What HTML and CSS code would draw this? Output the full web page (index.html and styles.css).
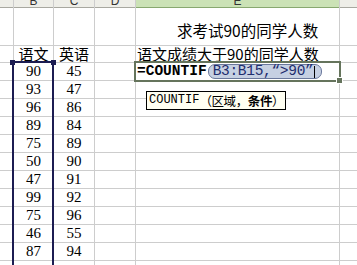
FILE: index.html
```html
<!DOCTYPE html>
<html lang="zh-CN">
<head>
  <meta charset="UTF-8" />
  <title>COUNTIF</title>
  <link rel="stylesheet" href="styles.css">
</head>
<body>
  <div class="sheet">
    <!-- column headers -->
    <div class="hd"></div>
    <div class="hd">B</div>
    <div class="hd">C</div>
    <div class="hd">D</div>
    <div class="hd hd-on">E</div>
    <div class="hd"></div>

    <!-- row 1 -->
    <div class="c tall"></div>
    <div class="c tall"></div>
    <div class="c tall"></div>
    <div class="c tall"></div>
    <div class="c tall title">求考试90的同学人数</div>
    <div class="c tall"></div>

    <!-- row 2 -->
    <div class="c"></div>
    <div class="c mid cjk">语文</div>
    <div class="c mid cjk">英语</div>
    <div class="c"></div>
    <div class="c cjk">语文成绩大于90的同学人数</div>
    <div class="c"></div>

    <!-- row 3 -->
    <div class="c"></div>
    <div class="c mid">90</div>
    <div class="c mid">45</div>
    <div class="c"></div>
    <div class="c active">
      <span class="fx">=COUNTIF</span><span class="ref">B3:B15,“&gt;90”<i class="caret"></i></span>
      <span class="fill"></span>
    </div>
    <div class="c"></div>

    <div class="c"></div><div class="c mid">93</div><div class="c mid">47</div><div class="c"></div>
    <div class="c">
      <div class="tip">COUNTIF<span class="tip-cjk">（区域，<b>条件</b>）</span></div>
    </div>
    <div class="c"></div>
    <div class="c"></div><div class="c mid">96</div><div class="c mid">86</div><div class="c"></div><div class="c"></div><div class="c"></div>
    <div class="c"></div><div class="c mid">89</div><div class="c mid">84</div><div class="c"></div><div class="c"></div><div class="c"></div>
    <div class="c"></div><div class="c mid">75</div><div class="c mid">89</div><div class="c"></div><div class="c"></div><div class="c"></div>
    <div class="c"></div><div class="c mid">50</div><div class="c mid">90</div><div class="c"></div><div class="c"></div><div class="c"></div>
    <div class="c"></div><div class="c mid">47</div><div class="c mid">91</div><div class="c"></div><div class="c"></div><div class="c"></div>
    <div class="c"></div><div class="c mid">99</div><div class="c mid">92</div><div class="c"></div><div class="c"></div><div class="c"></div>
    <div class="c"></div><div class="c mid">75</div><div class="c mid">96</div><div class="c"></div><div class="c"></div><div class="c"></div>
    <div class="c"></div><div class="c mid">46</div><div class="c mid">55</div><div class="c"></div><div class="c"></div><div class="c"></div>
    <div class="c"></div><div class="c mid">87</div><div class="c mid">94</div><div class="c"></div><div class="c"></div><div class="c"></div>
    <div class="c"></div><div class="c mid"></div><div class="c mid"></div><div class="c"></div><div class="c"></div><div class="c"></div>

    <!-- B3:B15 range outline -->
    <div class="range">
      <span class="knob knob-l"></span>
      <span class="knob knob-r"></span>
    </div>
  </div>
</body>
</html>
```

FILE: styles.css
```css
body {
  margin: 0;
  background: #fff;
  overflow: hidden;
}

.sheet {
  position: relative;
  display: grid;
  grid-template-columns: 13px 39px 40px 40px 203px 30px;
  grid-template-rows: 7px 37px 16px repeat(12, 17px);
  gap: 1px;
  background: #cdcdcd;
  width: 357px;
  height: 265px;
  overflow: hidden;
  font-family: "Liberation Serif", "Noto Sans CJK SC", serif;
  font-size: 15px;
  color: #000;
}

.hd {
  background: #eeeee8;
  display: flex;
  justify-content: center;
  align-items: flex-end;
  overflow: hidden;
  font-family: "Liberation Sans", sans-serif;
  font-size: 12px;
  line-height: 12px;
  color: #333;
  border-bottom: 1px solid #a8a8a0;
  margin-bottom: -1px;
}

.hd-on {
  background: #cbe2b6;
  border-bottom-color: #88a870;
}

.c {
  background: #fff;
  display: flex;
  align-items: center;
  line-height: 17px;
  white-space: nowrap;
  position: relative;
}

.mid {
  justify-content: center;
}

.cjk {
  font-family: "Noto Sans CJK SC", sans-serif;
  font-size: 15px;
  line-height: 16px;
  padding-left: 1px;
}

.mid.cjk {
  padding-left: 0;
}

.tall {
  align-items: flex-end;
}

.title {
  font-family: "Noto Sans CJK SC", sans-serif;
  font-size: 15.5px;
  line-height: 16px;
  padding: 0 0 7px 41px;
}

.active {
  outline: 2px solid #65745c;
  z-index: 2;
  padding-left: 1px;
  font-family: "Liberation Mono", monospace;
  font-size: 14.5px;
}

.fx {
  font-weight: bold;
}

.ref {
  display: flex;
  align-items: center;
  height: 13px;
  margin-left: 1px;
  padding: 0 6px 0 4px;
  background: #c6d0e2;
  border: 1px solid #6a789c;
  border-radius: 7px;
  color: #1e2d6e;
  line-height: 13px;
  letter-spacing: -0.3px;
}

.caret {
  display: inline-block;
  width: 1px;
  height: 12px;
  background: #000;
  margin-left: 1px;
}

.fill {
  position: absolute;
  right: -4px;
  bottom: -4px;
  width: 5px;
  height: 5px;
  background: #65745c;
  border: 1px solid #fff;
}

.tip {
  position: absolute;
  left: 10px;
  top: 10px;
  z-index: 3;
  height: 17px;
  padding: 0 1px 0 2px;
  background: #fffff2;
  border: 1px solid #000;
  font-family: "Liberation Mono", monospace;
  font-size: 12px;
  line-height: 17px;
  display: flex;
  align-items: center;
}

.tip-cjk {
  font-family: "Noto Sans CJK SC", sans-serif;
  font-size: 12.5px;
  letter-spacing: -0.4px;
}

.range {
  position: absolute;
  left: 12px;
  top: 61px;
  width: 38px;
  height: 240px;
  border: 2px solid #1c1c52;
  z-index: 2;
}

.knob {
  position: absolute;
  top: -3px;
  width: 5px;
  height: 5px;
  background: #1c1c52;
}

.knob-l {
  left: -4px;
}

.knob-r {
  right: -4px;
}
```
